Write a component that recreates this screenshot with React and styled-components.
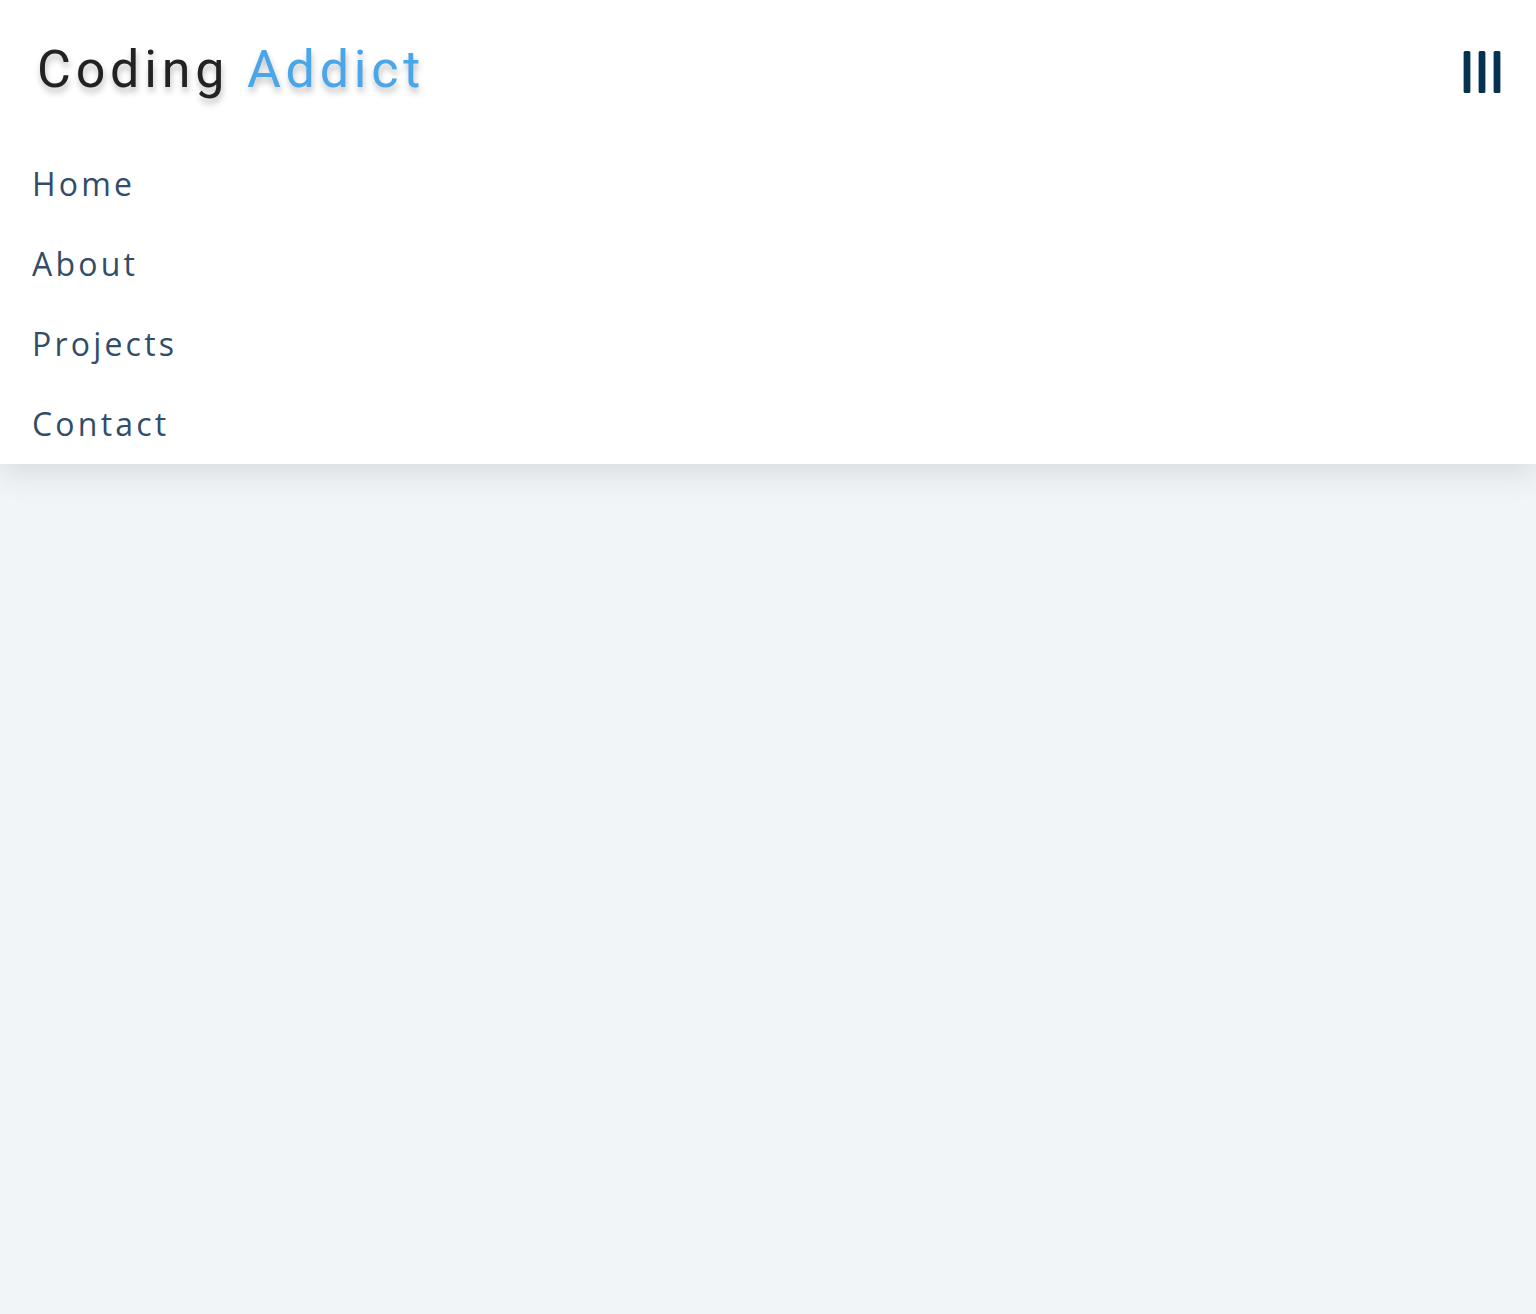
import React from 'react';
import styled, { createGlobalStyle } from 'styled-components';

const GlobalStyle = createGlobalStyle`
    * {
        margin: 0;
        padding: 0;
        box-sizing: border-box;
    }
    body {
        background: #f1f5f8;
        color: #102a42;
        font-family: "Open Sans", sans-serif;
        min-height: 100vh;
    }
`;

const Nav = styled.nav`
    background: #fff;
    box-shadow: 0 10px 30px rgba(0, 0, 0, 0.1);
`;

const NavHeader = styled.div`
    display: flex;
    align-items: center;
    justify-content: space-between;
    height: 144px;
    padding: 32px;
`;

const Logo = styled.h1`
    font-family: Roboto, "Liberation Sans", sans-serif;
    font-weight: 400;
    font-size: 52px;
    line-height: 1;
    letter-spacing: 4.8px;
    color: #222;
    padding: 0 0 4px 5px;
    text-shadow: 1px 5px 6px rgba(0, 0, 0, 0.25);
`;

const Accent = styled.span`
    color: #49a6e9;
`;

const Toggle = styled.button`
    display: flex;
    background: transparent;
    border: none;
    color: #063251;
    cursor: pointer;
    margin-right: -2px;
`;

const Links = styled.ul`
    list-style: none;
`;

const LinkItem = styled.li`
    a {
        display: block;
        padding: 16px 32px;
        font-size: 32px;
        line-height: 48px;
        letter-spacing: 3.2px;
        color: #324d67;
        text-decoration: none;
        text-transform: capitalize;
    }
`;

const links = ['home', 'about', 'projects', 'contact'];

const BarsIcon = () => (
    <svg width="48" height="48" viewBox="0 0 512 512" fill="currentColor">
        <rect x="60" y="32" width="72" height="448" rx="16" />
        <rect x="220" y="32" width="72" height="448" rx="16" />
        <rect x="380" y="32" width="72" height="448" rx="16" />
    </svg>
);

const App = () => {
    return (
        <>
            <GlobalStyle />
            <Nav>
                <NavHeader>
                    <Logo>
                        Coding <Accent>Addict</Accent>
                    </Logo>
                    <Toggle aria-label="toggle menu">
                        <BarsIcon />
                    </Toggle>
                </NavHeader>
                <Links>
                    {links.map((link) => (
                        <LinkItem key={link}>
                            <a href={`#${link}`}>{link}</a>
                        </LinkItem>
                    ))}
                </Links>
            </Nav>
        </>
    );
};

export default App;
